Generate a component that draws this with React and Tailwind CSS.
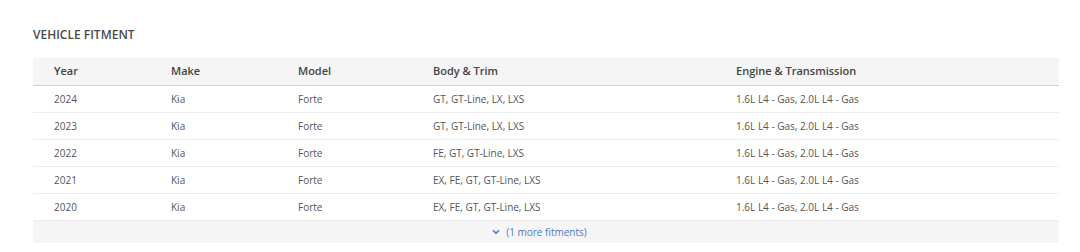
import { ChevronDown } from "lucide-react";

const fitments = [
  { year: "2024", make: "Kia", model: "Forte", trim: "GT, GT-Line, LX, LXS", engine: "1.6L L4 - Gas, 2.0L L4 - Gas" },
  { year: "2023", make: "Kia", model: "Forte", trim: "GT, GT-Line, LX, LXS", engine: "1.6L L4 - Gas, 2.0L L4 - Gas" },
  { year: "2022", make: "Kia", model: "Forte", trim: "FE, GT, GT-Line, LXS", engine: "1.6L L4 - Gas, 2.0L L4 - Gas" },
  { year: "2021", make: "Kia", model: "Forte", trim: "EX, FE, GT, GT-Line, LXS", engine: "1.6L L4 - Gas, 2.0L L4 - Gas" },
  { year: "2020", make: "Kia", model: "Forte", trim: "EX, FE, GT, GT-Line, LXS", engine: "1.6L L4 - Gas, 2.0L L4 - Gas" },
];

const cols = "grid grid-cols-[117px_127px_135px_303px_1fr] pl-[21px] items-center";

function App() {
  return (
    <div className="w-[1080px] h-[252px] bg-white pl-[33px] pr-[21px] pt-[27px] font-['Open_Sans',sans-serif]">
      <h2 className="text-[12px] leading-[16px] font-semibold text-[#4a4a4a] uppercase">Vehicle Fitment</h2>

      <div className="mt-[15px]">
        {/* header */}
        <div className={`${cols} h-[28px] bg-[#f5f5f5] border-b border-[#cfcfcf] text-[11px] font-semibold text-[#444]`}>
          <span>Year</span>
          <span>Make</span>
          <span>Model</span>
          <span>Body &amp; Trim</span>
          <span>Engine &amp; Transmission</span>
        </div>

        {fitments.map((f) => (
          <div key={f.year} className={`${cols} h-[27px] border-b border-[#ededed] text-[10px] text-[#555]`}>
            <span>{f.year}</span>
            <span>{f.make}</span>
            <span>{f.model}</span>
            <span>{f.trim}</span>
            <span>{f.engine}</span>
          </div>
        ))}

        {/* footer */}
        <div className="h-[22px] bg-[#f5f5f5] flex items-center justify-center gap-[5px] text-[10px] text-[#4a7bc8] pr-[14px]">
          <ChevronDown size={10} strokeWidth={4} />
          <span>(1 more fitments)</span>
        </div>
      </div>
    </div>
  );
}

export default App;
